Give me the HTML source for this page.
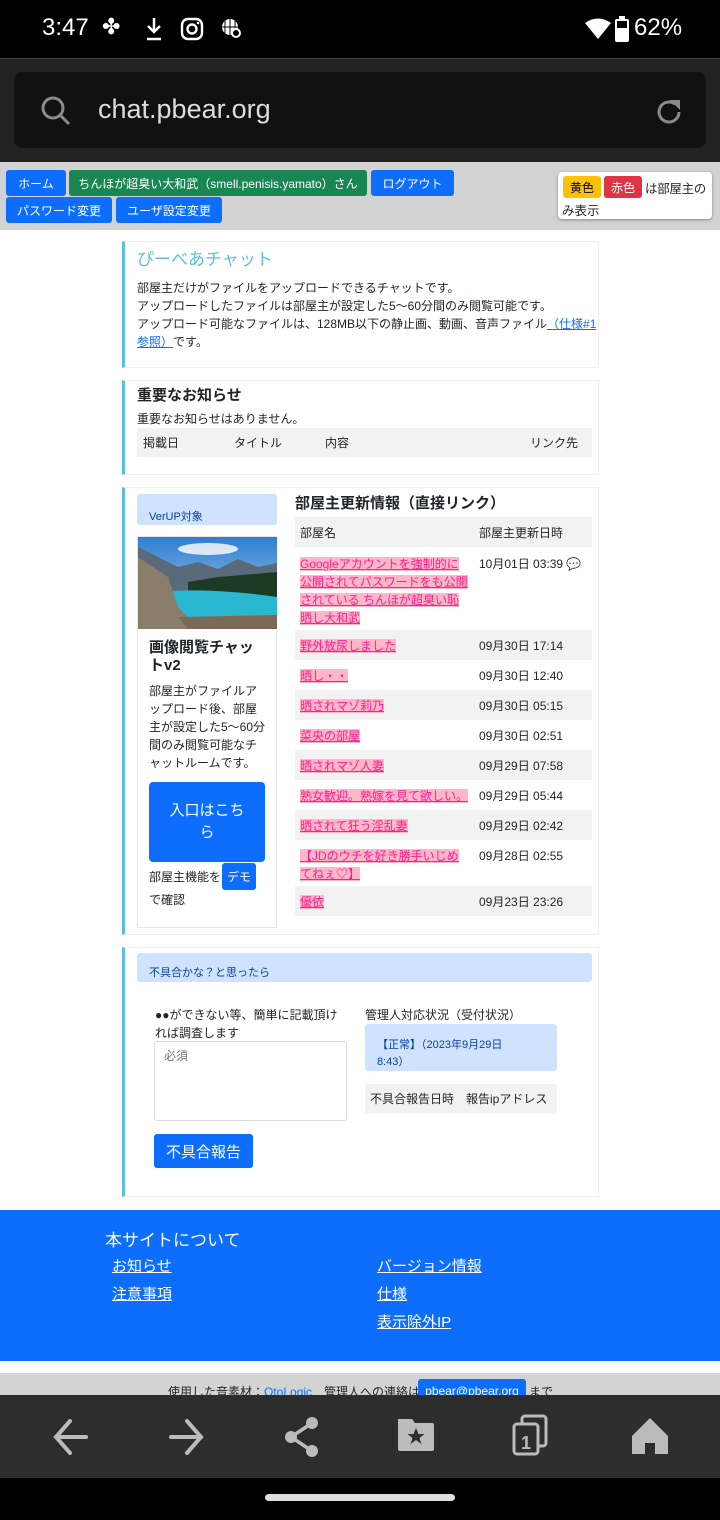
<!DOCTYPE html>
<html><head><meta charset="utf-8"><style>
*{margin:0;padding:0;box-sizing:border-box}
body{width:720px;height:1520px;position:relative;overflow:hidden;background:#fff;font-family:"Liberation Sans","Noto Sans CJK JP",sans-serif;color:#212529}
.a{position:absolute}
.btn{position:absolute;background:#0d6efd;color:#fff;border-radius:3px;font-size:12px;display:flex;align-items:center;justify-content:center;white-space:nowrap}
.card{position:absolute;border:1px solid #f0f0f0;border-left:3px solid #5bc0de}
.t{position:absolute;font-size:12px;white-space:nowrap}
.lk{background:#ffb6c8;color:#ff1f8f;text-decoration:underline;font-size:12px}
.row{position:absolute;left:295px;width:297px}
.g{background:#f2f2f2}
.fl{position:absolute;color:#fff;text-decoration:underline;font-size:15px}
</style></head><body>
<div class="a" style="left:0;top:0;width:720px;height:58px;background:#000"></div>
<div class="t" style="left:42px;top:14px;color:#fff;font-size:24px">3:47</div>
<div class="t" style="left:102px;top:14px;color:#fff;font-size:22px">✤</div>
<svg class="a" style="left:144px;top:16px" width="20" height="26"><path d="M10 2v14M4 10l6 6 6-6M3 23h14" stroke="#fff" stroke-width="2.5" fill="none"/></svg>
<svg class="a" style="left:180px;top:17px" width="24" height="24"><rect x="2" y="2" width="20" height="20" rx="6" stroke="#fff" stroke-width="2.4" fill="none"/><circle cx="12" cy="12" r="4.5" stroke="#fff" stroke-width="2.4" fill="none"/><circle cx="18" cy="6" r="1.3" fill="#fff"/></svg>
<svg class="a" style="left:220px;top:17px" width="24" height="24"><circle cx="10" cy="10" r="8" fill="#fff"/><path d="M2 10h16M10 2v16M5 4v12M15 4v12" stroke="#000" stroke-width="1"/><circle cx="16" cy="16" r="4" stroke="#fff" stroke-width="2" fill="#000"/></svg>
<svg class="a" style="left:584px;top:18px" width="28" height="22"><path d="M1 5Q14-4 27 5L14 21Z" fill="#fff"/></svg>
<svg class="a" style="left:614px;top:15px" width="16" height="28"><rect x="5" y="1" width="6" height="3" fill="#fff"/><rect x="1" y="4" width="14" height="23" rx="2" fill="#fff"/><rect x="3" y="6" width="10" height="7" fill="#000"/></svg>
<div class="t" style="left:634px;top:14px;color:#fff;font-size:24px">62%</div>
<div class="a" style="left:0;top:58px;width:720px;height:104px;background:#222;border-top:1px solid #444"></div>
<div class="a" style="left:14px;top:72px;width:692px;height:76px;background:#111;border-radius:8px"></div>
<svg class="a" style="left:40px;top:95px" width="32" height="32"><circle cx="13" cy="13" r="10" stroke="#8a8a8a" stroke-width="3" fill="none"/><path d="M20 20l9 9" stroke="#8a8a8a" stroke-width="3"/></svg>
<div class="t" style="left:98px;top:94px;color:#ddd;font-size:27px">chat.pbear.org</div>
<svg class="a" style="left:653px;top:96px" width="32" height="32"><path d="M26 16A10 10 0 1 1 22 8" stroke="#8a8a8a" stroke-width="3" fill="none"/><path d="M17 4h10v10z" fill="#8a8a8a"/></svg>
<div class="a" style="left:0;top:162px;width:720px;height:68px;background:#d3d3d3"></div>
<div class="btn" style="left:6px;top:170px;width:60px;height:26px">ホーム</div>
<div class="btn" style="left:69px;top:170px;width:298px;height:26px;background:#198754">ちんほが超臭い大和武（smell.penisis.yamato）さん</div>
<div class="btn" style="left:371px;top:170px;width:83px;height:26px">ログアウト</div>
<div class="btn" style="left:6px;top:197px;width:106px;height:26px">パスワード変更</div>
<div class="btn" style="left:116px;top:197px;width:106px;height:26px">ユーザ設定変更</div>
<div class="a" style="left:558px;top:172px;width:154px;height:47px;background:#fff;border-radius:4px;box-shadow:0 1px 3px #888"></div>
<div class="btn" style="left:563px;top:176px;width:38px;height:22px;background:#ffc107;color:#000">黄色</div>
<div class="btn" style="left:604px;top:176px;width:38px;height:22px;background:#dc3545">赤色</div>
<div class="t" style="left:645px;top:178px;font-size:12.5px;letter-spacing:-0.3px">は部屋主の</div>
<div class="t" style="left:562px;top:200px;font-size:12.5px">み表示</div>
<div class="card" style="left:122px;top:241px;width:477px;height:127px"></div>
<div class="t" style="left:137px;top:245px;font-size:17px;color:#5bc0de">ぴーべあチャット</div>
<div class="t" style="left:137px;top:279px;line-height:18px">部屋主だけがファイルをアップロードできるチャットです。<br>アップロードしたファイルは部屋主が設定した5～60分間のみ閲覧可能です。<br>アップロード可能なファイルは、128MB以下の静止画、動画、音声ファイル<span style="color:#0d6efd;text-decoration:underline">（仕様#1</span><br><span style="color:#0d6efd;text-decoration:underline">参照）</span>です。</div>
<div class="card" style="left:122px;top:380px;width:477px;height:95px"></div>
<div class="t" style="left:137px;top:384px;font-size:15px;font-weight:bold">重要なお知らせ</div>
<div class="t" style="left:137px;top:410px">重要なお知らせはありません。</div>
<div class="a g" style="left:137px;top:428px;width:455px;height:29px"></div>
<div class="t" style="left:143px;top:434px">掲載日</div><div class="t" style="left:234px;top:434px">タイトル</div><div class="t" style="left:325px;top:434px">内容</div><div class="t" style="left:530px;top:434px">リンク先</div>
<div class="card" style="left:122px;top:487px;width:477px;height:448px"></div>
<div class="a" style="left:137px;top:536px;width:140px;height:392px;border:1px solid #e6e6e6"></div>
<div class="a" style="left:137px;top:494px;width:140px;height:31px;background:#cfe2ff;border-radius:3px"></div>
<div class="t" style="left:149px;top:508px;font-size:11px;color:#084298">VerUP対象</div>
<svg class="a" style="left:138px;top:537px" width="139" height="92"><defs><linearGradient id="s" x1="0" y1="0" x2="0" y2="1"><stop offset="0" stop-color="#2f7fd0"/><stop offset="1" stop-color="#b8d8f0"/></linearGradient></defs><rect width="139" height="92" fill="url(#s)"/><ellipse cx="70" cy="12" rx="30" ry="6" fill="#fff" opacity=".8"/><path d="M0 10L20 20 40 30 60 25 80 32 100 22 120 30 139 26V60H0z" fill="#5a6a7a"/><path d="M50 45L80 40 139 35V70H50z" fill="#1d3b24"/><path d="M20 55Q70 50 139 60V82H30z" fill="#2ab7d0"/><path d="M0 20L30 40 40 70 60 92H0z" fill="#8a7d6a"/><path d="M40 80L139 78V92H50z" fill="#7a6a55"/></svg>
<div class="t" style="left:149px;top:639px;font-size:15px;font-weight:bold;line-height:18px">画像閲覧チャッ<br>トv2</div>
<div class="t" style="left:149px;top:682px;line-height:18px">部屋主がファイルア<br>ップロード後、部屋<br>主が設定した5～60分<br>間のみ閲覧可能なチ<br>ャットルームです。</div>
<div class="btn" style="left:149px;top:782px;width:116px;height:80px;font-size:15px;line-height:22px;text-align:center;border-radius:4px">入口はこち<br>ら</div>
<div class="t" style="left:149px;top:868px">部屋主機能を</div>
<div class="btn" style="left:222px;top:863px;width:34px;height:27px">デモ</div>
<div class="t" style="left:149px;top:891px">で確認</div>
<div class="t" style="left:295px;top:492px;font-size:15px;font-weight:bold">部屋主更新情報（直接リンク）</div>
<div class="row g" style="top:517px;height:30px"></div>
<div class="t" style="left:300px;top:524px">部屋名</div><div class="t" style="left:479px;top:524px">部屋主更新日時</div>
<div class="t" style="left:300px;top:555px;line-height:18px;white-space:normal;width:168px"><span class="lk">Googleアカウントを強制的に公開されてパスワードをも公開されている ちんほが超臭い恥晒し大和武</span></div>
<div class="t" style="left:479px;top:555px">10月01日 03:39 <span style="color:#6a5cff">💬</span></div>
<div class="row g" style="top:630px;height:30px"></div>
<div class="t" style="left:300px;top:637px"><span class="lk">野外放尿しました</span></div><div class="t" style="left:479px;top:637px">09月30日 17:14</div>
<div class="t" style="left:300px;top:667px"><span class="lk">晒し・・</span></div><div class="t" style="left:479px;top:667px">09月30日 12:40</div>
<div class="row g" style="top:690px;height:30px"></div>
<div class="t" style="left:300px;top:697px"><span class="lk">晒されマゾ莉乃</span></div><div class="t" style="left:479px;top:697px">09月30日 05:15</div>
<div class="t" style="left:300px;top:727px"><span class="lk">菜央の部屋</span></div><div class="t" style="left:479px;top:727px">09月30日 02:51</div>
<div class="row g" style="top:750px;height:30px"></div>
<div class="t" style="left:300px;top:757px"><span class="lk">晒されマゾ人妻</span></div><div class="t" style="left:479px;top:757px">09月29日 07:58</div>
<div class="t" style="left:300px;top:787px"><span class="lk">熟女歓迎。熟嫁を見て欲しい。</span></div><div class="t" style="left:479px;top:787px">09月29日 05:44</div>
<div class="row g" style="top:810px;height:30px"></div>
<div class="t" style="left:300px;top:817px"><span class="lk">晒されて狂う淫乱妻</span></div><div class="t" style="left:479px;top:817px">09月29日 02:42</div>
<div class="t" style="left:300px;top:847px;line-height:18px;white-space:normal;width:170px"><span class="lk">【JDのウチを好き勝手いじめてねぇ♡】</span></div><div class="t" style="left:479px;top:847px">09月28日 02:55</div>
<div class="row g" style="top:886px;height:30px"></div>
<div class="t" style="left:300px;top:893px"><span class="lk">優依</span></div><div class="t" style="left:479px;top:893px">09月23日 23:26</div>
<div class="card" style="left:122px;top:947px;width:477px;height:250px"></div>
<div class="a" style="left:137px;top:953px;width:455px;height:29px;background:#cfe2ff;border-radius:3px"></div>
<div class="t" style="left:149px;top:964px;font-size:11px;color:#084298">不具合かな？と思ったら</div>
<div class="t" style="left:155px;top:1006px;line-height:18px">●●ができない等、簡単に記載頂け<br>れば調査します</div>
<div class="a" style="left:154px;top:1041px;width:193px;height:80px;border:1px solid #ddd;border-radius:3px"></div>
<div class="t" style="left:164px;top:1047px;color:#777">必須</div>
<div class="btn" style="left:154px;top:1134px;width:99px;height:34px;font-size:15px">不具合報告</div>
<div class="t" style="left:365px;top:1006px">管理人対応状況（受付状況）</div>
<div class="a" style="left:365px;top:1024px;width:192px;height:47px;background:#cfe2ff;border-radius:3px"></div>
<div class="t" style="left:377px;top:1037px;font-size:11px;color:#084298;line-height:17px">【正常】（2023年9月29日<br>8:43）</div>
<div class="a g" style="left:365px;top:1084px;width:192px;height:29px"></div>
<div class="t" style="left:370px;top:1090px">不具合報告日時　報告ipアドレス</div>
<div class="a" style="left:0;top:1210px;width:720px;height:151px;background:#0d6efd"></div>
<div class="t" style="left:105px;top:1226px;color:#fff;font-size:17px">本サイトについて</div>
<div class="fl" style="left:112px;top:1255px">お知らせ</div>
<div class="fl" style="left:112px;top:1283px">注意事項</div>
<div class="fl" style="left:377px;top:1255px">バージョン情報</div>
<div class="fl" style="left:377px;top:1283px">仕様</div>
<div class="fl" style="left:377px;top:1311px">表示除外IP</div>
<div class="a" style="left:0;top:1373px;width:720px;height:22px;background:#d3d3d3;overflow:hidden">
<div class="t" style="left:168px;top:10px">使用した音素材：<span style="color:#0d6efd">OtoLogic</span>　管理人への連絡は</div>
<div class="btn" style="left:418px;top:6px;width:108px;height:24px">pbear@pbear.org</div>
<div class="t" style="left:529px;top:10px">まで</div></div>
<div class="a" style="left:0;top:1395px;width:720px;height:83px;background:#2d2d2d"></div>
<svg class="a" style="left:50px;top:1415px" width="44" height="44"><path d="M36 22H6M20 6L6 22l14 16" stroke="#bbb" stroke-width="4" fill="none" stroke-linecap="round"/></svg>
<svg class="a" style="left:165px;top:1415px" width="44" height="44"><path d="M6 22h30M22 6l14 16-14 16" stroke="#bbb" stroke-width="4" fill="none" stroke-linecap="round"/></svg>
<svg class="a" style="left:282px;top:1415px" width="44" height="44"><circle cx="30" cy="8" r="6" fill="#bbb"/><circle cx="9" cy="22" r="6" fill="#bbb"/><circle cx="30" cy="36" r="6" fill="#bbb"/><path d="M30 8L9 22l21 14" stroke="#bbb" stroke-width="3.5" fill="none"/></svg>
<svg class="a" style="left:396px;top:1415px" width="44" height="44"><path d="M2 4h14l3 4h17a2 2 0 0 1 2 2v24a2 2 0 0 1-2 2H4a2 2 0 0 1-2-2z" fill="#bbb"/><path d="M20 13l2.5 6h6l-5 4 2 6-5.5-4-5.5 4 2-6-5-4h6z" fill="#2d2d2d"/></svg>
<svg class="a" style="left:510px;top:1413px" width="44" height="46"><rect x="12" y="3" width="24" height="30" rx="3" stroke="#bbb" stroke-width="3" fill="none"/><rect x="4" y="11" width="24" height="30" rx="3" stroke="#bbb" stroke-width="3" fill="#2d2d2d"/><text x="11" y="36" fill="#bbb" font-size="18" font-weight="bold" font-family="Liberation Sans">1</text></svg>
<svg class="a" style="left:628px;top:1414px" width="44" height="44"><path d="M22 4L40 22v18H27V29h-10v11H4V22z" fill="#bbb"/></svg>
<div class="a" style="left:0;top:1478px;width:720px;height:42px;background:#000"></div>
<div class="a" style="left:265px;top:1494px;width:190px;height:7px;background:#ddd;border-radius:4px"></div>
</body></html>
